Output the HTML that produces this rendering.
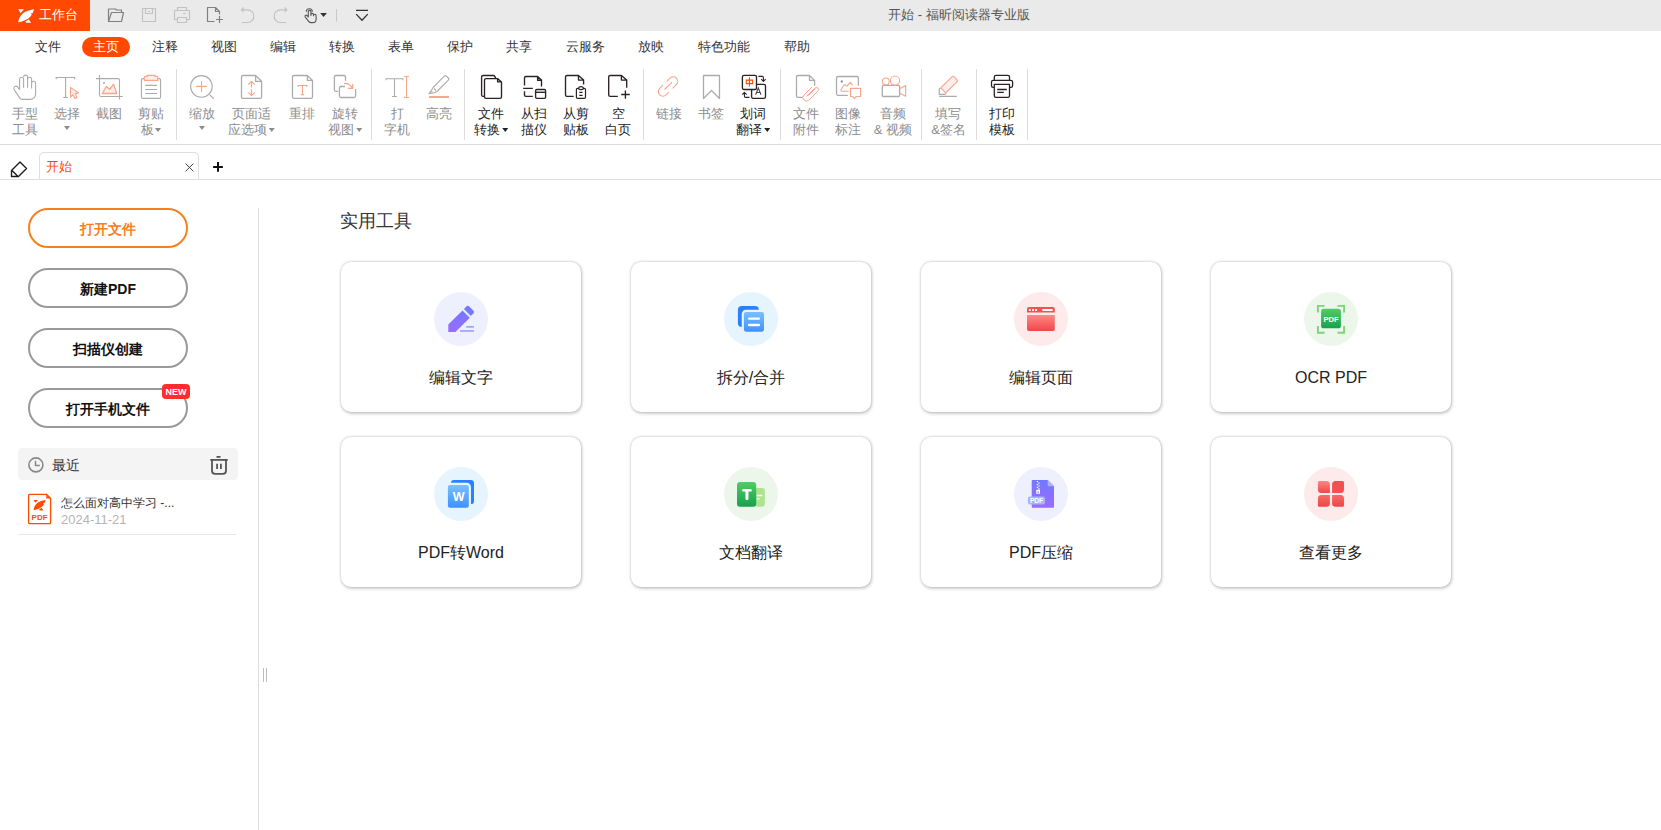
<!DOCTYPE html>
<html><head><meta charset="utf-8">
<style>
*{box-sizing:border-box}
html,body{margin:0;padding:0}
body{width:1661px;height:830px;position:relative;overflow:hidden;background:#fff;font-family:"Liberation Sans",sans-serif;color:#333}
.abs{position:absolute}
#title{left:0;top:0;width:1661px;height:31px;background:#eaeaea}
#ws{left:0;top:0;width:90px;height:31px;background:#ff4800;color:#fff;font-size:13px}
#ws span{position:absolute;left:39px;top:6px;line-height:18px}
#ttl{left:0;top:6px;width:1661px;text-align:center;font-size:13px;color:#555;line-height:18px;padding-left:257px}
.menu{top:37px;font-size:13px;line-height:19px;color:#333;white-space:nowrap;transform:translateX(-50%)}
#pill{left:82px;top:37px;width:48px;height:19.5px;border-radius:10px;background:#ff4800}
.tb{position:absolute;top:105.6px;font-size:13px;line-height:16.8px;text-align:center;white-space:nowrap;transform:translateX(-50%)}
.g{color:#8c8c8c}
.d{color:#222}
.arr{display:inline-block;width:0;height:0;border-left:3.8px solid transparent;border-right:3.8px solid transparent;border-top:4.2px solid currentColor;vertical-align:middle;margin-left:1.5px;position:relative;top:-1px}
.sep{position:absolute;top:69px;width:1px;height:71px;background:#dcdcdc}
svg{position:absolute;overflow:visible}
.btn{position:absolute;left:28px;width:160px;height:40px;border:2px solid #999;border-radius:20px;text-align:center;font-weight:bold;font-size:14px;line-height:38px;color:#111}
.card{position:absolute;width:240px;height:150px;border-radius:10px;background:#fff;box-shadow:0 0 3px rgba(0,0,0,.24),1px 1.5px 3.5px rgba(0,0,0,.16)}
.card .c{position:absolute;left:93px;top:30px;width:54px;height:54px;border-radius:50%}
.card .l{position:absolute;left:0;top:105px;width:240px;text-align:center;font-size:16px;line-height:22px;color:#222}
</style></head>
<body>
<!-- title bar -->
<div id="title" class="abs"></div>
<div id="ws" class="abs"><span>工作台</span></div>
<div id="ttl" class="abs">开始 - 福昕阅读器专业版</div>

<!-- menu -->
<div id="pill" class="abs"></div>
<div class="abs menu" style="left:48px">文件</div>
<div class="abs menu" style="left:106px;color:#fff">主页</div>
<div class="abs menu" style="left:165px">注释</div>
<div class="abs menu" style="left:224px">视图</div>
<div class="abs menu" style="left:283px">编辑</div>
<div class="abs menu" style="left:342px">转换</div>
<div class="abs menu" style="left:401px">表单</div>
<div class="abs menu" style="left:460px">保护</div>
<div class="abs menu" style="left:519px">共享</div>
<div class="abs menu" style="left:585.5px">云服务</div>
<div class="abs menu" style="left:651px">放映</div>
<div class="abs menu" style="left:724px">特色功能</div>
<div class="abs menu" style="left:797px">帮助</div>

<!-- toolbar labels -->
<div class="tb g" style="left:25px">手型<br>工具</div>
<div class="tb g" style="left:67px">选择<br><span class="arr" style="margin:0;top:-3px"></span></div>
<div class="tb g" style="left:108.5px">截图</div>
<div class="tb g" style="left:151px">剪贴<br>板<span class="arr"></span></div>
<div class="sep" style="left:176px"></div>
<div class="tb g" style="left:202px">缩放<br><span class="arr" style="margin:0;top:-3px"></span></div>
<div class="tb g" style="left:251.5px">页面适<br>应选项<span class="arr"></span></div>
<div class="tb g" style="left:302px">重排</div>
<div class="tb g" style="left:345px">旋转<br>视图<span class="arr"></span></div>
<div class="sep" style="left:371px"></div>
<div class="tb g" style="left:397px">打<br>字机</div>
<div class="tb g" style="left:439px">高亮</div>
<div class="sep" style="left:464px"></div>
<div class="tb d" style="left:491px">文件<br>转换<span class="arr"></span></div>
<div class="tb d" style="left:534px">从扫<br>描仪</div>
<div class="tb d" style="left:576px">从剪<br>贴板</div>
<div class="tb d" style="left:618px">空<br>白页</div>
<div class="sep" style="left:643px"></div>
<div class="tb g" style="left:669px">链接</div>
<div class="tb g" style="left:711px">书签</div>
<div class="tb d" style="left:753px">划词<br>翻译<span class="arr"></span></div>
<div class="sep" style="left:780px"></div>
<div class="tb g" style="left:806px">文件<br>附件</div>
<div class="tb g" style="left:848px">图像<br>标注</div>
<div class="tb g" style="left:893px">音频<br>&amp; 视频</div>
<div class="sep" style="left:921px"></div>
<div class="tb g" style="left:948.5px">填写<br>&amp;签名</div>
<div class="sep" style="left:976px"></div>
<div class="tb d" style="left:1001.5px">打印<br>模板</div>
<div class="sep" style="left:1027px"></div>
<div class="abs" style="left:0;top:144px;width:1661px;height:1px;background:#dcdcdc"></div>

<!-- tab row -->
<div class="abs" style="left:39px;top:152px;width:160px;height:28px;border:1px solid #dedede;border-bottom:none;border-radius:5px 5px 0 0;background:#fff"></div>
<div class="abs" style="left:46px;top:157px;font-size:13px;line-height:19px;color:#ff4800">开始</div>
<div class="abs" style="left:0;top:179px;width:1661px;height:1px;background:#dedede"></div>

<!-- sidebar -->
<div class="btn" style="top:208px;border-color:#f5801f;color:#f5801f">打开文件</div>
<div class="btn" style="top:268px">新建PDF</div>
<div class="btn" style="top:328px">扫描仪创建</div>
<div class="btn" style="top:388px">打开手机文件</div>
<div class="abs" style="left:162px;top:384px;width:28px;height:15px;border-radius:4px;background:#ff2d2d;color:#fff;font-weight:bold;font-size:9px;line-height:16px;text-align:center">NEW</div>
<div class="abs" style="left:18px;top:448px;width:220px;height:32px;border-radius:4px;background:#f4f4f4"></div>
<div class="abs" style="left:52px;top:456px;font-size:14px;line-height:19px;color:#333">最近</div>
<div class="abs" style="left:61px;top:495px;font-size:12px;line-height:17px;color:#333">怎么面对高中学习 -...</div>
<div class="abs" style="left:61px;top:512px;font-size:13px;line-height:16px;color:#b4b4b4">2024-11-21</div>
<div class="abs" style="left:18px;top:534px;width:218px;height:1px;background:#e8e8e8"></div>
<div class="abs" style="left:258px;top:208px;width:1px;height:622px;background:#dcdcdc"></div>
<div class="abs" style="left:263px;top:668px;width:1px;height:14px;background:#bdbdbd"></div>
<div class="abs" style="left:266px;top:668px;width:1px;height:14px;background:#bdbdbd"></div>

<!-- main -->
<div class="abs" style="left:340px;top:209px;font-size:18px;line-height:24px;color:#333">实用工具</div>
<div class="card" style="left:341px;top:262px"><div class="c" style="background:#eff0fd"></div><div class="l">编辑文字</div></div>
<div class="card" style="left:631px;top:262px"><div class="c" style="background:#e6f4fd"></div><div class="l">拆分/合并</div></div>
<div class="card" style="left:921px;top:262px"><div class="c" style="background:#fdeaea"></div><div class="l">编辑页面</div></div>
<div class="card" style="left:1211px;top:262px"><div class="c" style="background:#edf6ea"></div><div class="l">OCR PDF</div></div>
<div class="card" style="left:341px;top:437px"><div class="c" style="background:#e6f4fd"></div><div class="l">PDF转Word</div></div>
<div class="card" style="left:631px;top:437px"><div class="c" style="background:#edf6ea"></div><div class="l">文档翻译</div></div>
<div class="card" style="left:921px;top:437px"><div class="c" style="background:#eff0fd"></div><div class="l">PDF压缩</div></div>
<div class="card" style="left:1211px;top:437px"><div class="c" style="background:#fdeaea"></div><div class="l">查看更多</div></div>


<svg class="ov" width="1661" height="830" viewBox="0 0 1661 830" style="position:absolute;left:0;top:0" fill="none" stroke-linecap="butt" stroke-linejoin="round">
<!-- title bar logo -->
<g fill="#fff">
<path d="M18.2,9.2 L24.1,9.2 L20.5,12.9 Z"/>
<path d="M18.4,22.6 C18.4,16.5 23.5,10.3 33.9,9.2 C33.6,11 33.2,12.2 32.4,13.2 L30.6,13.4 L31.7,14.6 C30.6,17.6 25.5,21 18.4,22.6 Z"/>
<path d="M25.4,21.4 L28.7,19.3 L31.1,22.8 L26.2,22.8 Z"/>
</g>
<!-- quick access -->
<g stroke="#808080" stroke-width="1.2">
<path d="M108.5,21.5 V9 H115.5 L116.5,10 H121.5 V12.5"/>
<path d="M108.5,21.5 L111.5,12.5 H123.5 L121.5,21.5 Z"/>
<path d="M214.5,21.5 H207.5 V7.5 H215.5 L219.5,11.5 V14.5 M215.5,7.5 V11.5 H219.5 M216,19.5 H223 M219.5,16 V23"/>
</g>
<g stroke="#c2c2c2" stroke-width="1.2">
<rect x="142.5" y="8.5" width="13" height="13"/>
<path d="M145.5,8.5 V13.5 H152.5 V8.5 M148,11.5 H150"/>
<path d="M177.5,10.5 V7.5 H186.5 V10.5 M177.5,19.5 H174.5 V10.5 H189.5 V19.5 H186.5 M183,13.5 H186"/>
<rect x="177.5" y="17.5" width="9" height="5"/>
<path d="M242,22.5 H247.5 A6.3,6.3 0 0 0 247.5,9.8 H241.5 M243.7,7.5 L241.4,9.8 L243.7,12.1"/>
<path d="M286,22.5 H280.5 A6.3,6.3 0 0 1 280.5,9.8 H287 M284.6,7.5 L286.9,9.8 L284.6,12.1"/>
</g>
<g stroke="#555" stroke-width="1.1">
<path d="M308.3,17.6 V11.7 A1.3,1.3 0 0 1 310.9,11.7 V15.6 V14.7 A1.3,1.3 0 0 1 313.5,14.7 V15.8 V15.5 A1.3,1.3 0 0 1 316.1,15.5 V19.2 Q316.1,22.6 312.8,22.6 H311.3 Q309.6,22.6 308.6,21.3 L305.3,17.1 Q304.6,16.1 305.4,15.4 Q306.2,14.8 307.1,15.7 L308.3,17"/>
<path d="M306.3,11.8 A3,3 0 0 1 312.3,11.8"/>
</g>
<path d="M320.2,12.9 H326.9 L323.55,17.1 Z" fill="#333"/>
<path d="M336.5,9.2 V21.7" stroke="#c8c8c8" stroke-width="1"/>
<path d="M356,10.3 H368 M356.2,14.1 L362,20.2 L367.8,14.1" stroke="#333" stroke-width="1.3"/>

<!-- toolbar: hand -->
<g stroke="#ababab" stroke-width="1.1">
<path d="M19.6,89.8 V79.2 A2,2 0 0 1 23.6,79.2 V87.8 M23.6,77.1 A2,2 0 0 1 27.6,77.1 V87.8 M27.6,79.2 A2,2 0 0 1 31.6,79.2 V88.5 M31.6,83.3 A2,2 0 0 1 35.6,83.3 V93.5 Q35.6,99.4 29.6,99.4 H22.2 Q20.6,99.4 19.4,97.6 L14.2,89.6 Q13.2,87.8 14.6,86.6 Q16.4,85.4 17.8,87.2 L19.6,89.8"/>
<!-- select T -->
<path stroke-linejoin="miter" d="M56.2,79.2 V77.5 H74.7 V79.2 M65.6,77.5 V97.5 M63.2,97.5 H68"/>
<!-- screenshot -->
<path d="M99.5,75 V95 Q99.5,96.5 101,96.5 H122.8 M96,78.6 H118 Q119.5,78.6 119.5,80 V99.6"/>
<!-- clipboard -->
<path d="M144.2,78.6 H142.9 Q141.4,78.6 141.4,80.1 V96.9 Q141.4,98.4 142.9,98.4 H159.1 Q160.6,98.4 160.6,96.9 V80.1 Q160.6,78.6 159.1,78.6 H157.8 M145.2,85.4 H157 M145.2,89.5 H157 M145.2,93.5 H157"/>
<!-- zoom -->
<circle cx="201.4" cy="86.4" r="10.8"/>
<path d="M209.6,94.6 L213.8,98.8"/>
<!-- fit page -->
<path d="M255.6,75.5 H243 Q241.5,75.5 241.5,77 V97 Q241.5,98.4 243,98.4 H260.1 Q261.6,98.4 261.6,97 V81.3 L255.6,75.5 V81.3 H261.6" stroke-width="1.3"/>
<!-- reflow -->
<path d="M307.4,75.5 H294 Q292.5,75.5 292.5,77 V97 Q292.5,98.4 294,98.4 H311 Q312.5,98.4 312.5,97 V80.4 L307.4,75.5 V80.4 H312.5" stroke-width="1.3"/>
<!-- rotate -->
<path d="M338,91.4 H335.9 Q334.4,91.4 334.4,89.9 V77 Q334.4,75.5 335.9,75.5 H344 Q345.5,75.5 345.5,77 V80.8 M345,86.5 H340.9 Q339.4,86.5 339.4,88 V96 Q339.4,97.5 340.9,97.5 H354.1 Q355.6,97.5 355.6,96 V89" stroke-width="1.3"/>
<!-- typewriter T -->
<path stroke-linejoin="miter" d="M386,80.2 V78.7 H402.9 V80.2 M394.5,78.7 V96.5 M392,96.5 H397"/>
<!-- highlight marker -->
<path d="M433,87.5 L444.3,76.2 Q445.4,75.1 446.5,76.2 L448.3,78 Q449.4,79.1 448.3,80.2 L437,91.5 M434,88.5 L436,90.5 M433,87.5 L431.5,90.2 L429,93.6 L434.5,92.8 L437,91.5"/>
<!-- bookmark -->
<path d="M703.5,98.5 V75.5 H719.5 V98.5 L711.5,90.5 Z" stroke-width="1.3"/>
<!-- file attach page -->
<path d="M802.8,97.4 H798 Q796.5,97.4 796.5,96 V77 Q796.5,75.5 798,75.5 H809.5 L814.6,80.4 V85.7 M809.5,75.5 V80.4 H814.6" stroke-width="1.3"/>
<!-- image annot frame -->
<path d="M847.8,95.3 H838 Q836.5,95.3 836.5,93.8 V78 Q836.5,76.5 838,76.5 H856.9 Q858.4,76.5 858.4,78 V85.7" stroke-width="1.3"/>
<!-- video body -->
<rect x="882.3" y="85.4" width="17.3" height="11.1" rx="1.2" stroke-width="1.3"/>
<!-- fill sign tip + line -->
<path d="M940.5,88 L939.2,89.2 V94.4 H944.9 L946,93.2 M939.2,96.4 H956.8" stroke-width="1.2"/>
</g>
<circle cx="104" cy="82.9" r="0.9" fill="#999"/>
<circle cx="841.8" cy="81.5" r="1.2" fill="#999"/>

<g stroke="#f9a68b" stroke-width="1.1">
<path d="M70.5,87.4 V97.2 L72.9,94.7 L75,98.5 L77,97.5 L75.1,93.6 L78.6,93 Z" fill="#fdeeee"/>
<path d="M102.3,93.5 L106.4,86.4 L109.5,89.5 L113.6,84.2 L116.7,93.5 Z" fill="#fdeeee" stroke-width="1.3"/>
<path d="M144.3,80.4 V77.6 Q144.3,76.3 145.6,76.3 H147.3 V75.4 H154.8 V76.3 H156.4 Q157.7,76.3 157.7,77.6 V80.4 Z" fill="#fdeeee" stroke-width="1.2"/>
<path d="M196,86.4 H206.9 M201.5,81 V91.9"/>
<path d="M251.5,81.5 V87.6 M248.2,84.6 L251.5,81.3 L254.8,84.6 M251.5,89.3 V95.6 M248.2,92.4 L251.5,95.7 L254.8,92.4" stroke-width="1.2"/>
<path stroke-linejoin="miter" d="M298,87 V85.5 H306.9 V87 M302.5,85.5 V94.6 M300.9,94.6 H304.1"/>
<path d="M344,83.4 Q349.5,83 352.2,88 M348.1,88.4 H352.7 V84" stroke-width="1.2"/>
<path d="M404,76.5 H409 M406.5,76.5 V97.5 M404,97.5 H409"/>
<path d="M430.8,90.7 L432.5,92.5" stroke-width="1.6"/>
<path d="M664.5,89.5 L672,82.2 M666.8,81.4 L670,78.2 A4.5,4.5 0 0 1 676.4,84.6 L672.6,88.4 M663,85.2 L659.7,88.4 A4.5,4.5 0 0 0 666.1,94.8 L668.7,92.2"/>
<path d="M806.5,96.5 L815,88 A2.1,2.1 0 0 1 818,91 L809,100 A3.5,3.5 0 0 1 804,95 L812,87 M808.5,95.5 L815.2,88.8" stroke-width="1"/>
<path d="M848.8,91.2 H842.2 Q840.2,91.2 841.2,89.2 L844.4,84.5 L847.1,86.1 L850.2,82.3 L852.6,85.4" stroke-width="1.1"/>
<path d="M850.5,88.3 H860.6 V96.5 H856.2 L854.5,98.7 L852.8,96.5 H850.5 Z" stroke-width="1.2"/>
<path d="M899.6,88.7 L905.6,85.6 V96.3 L899.6,93" stroke-width="1.2"/>
<circle cx="885.8" cy="81.4" r="3.4"/>
<circle cx="895" cy="80.6" r="4.6"/>
<path d="M940.8,87.9 L951.9,76.8 Q953,75.7 954.1,76.8 L956.9,79.6 Q958,80.7 956.9,81.8 L945.8,92.9 Z" fill="#fdeeee" stroke-width="1.2"/>
</g>
<rect x="429" y="96" width="20" height="2" fill="#f9a68b"/>

<!-- dark icons -->
<g stroke="#2b2323" stroke-width="1.35">
<path d="M484.2,96.4 H483 Q481.6,96.4 481.6,95 V77 Q481.6,75.5 483,75.5 H494 L495.8,78"/>
<path d="M497.6,78.6 H486 Q484.5,78.6 484.5,80.1 V97 Q484.5,98.4 486,98.4 H500 Q501.5,98.4 501.5,97 V81.9 L497.6,78.6 V81.9 H501.5"/>
<path d="M524.5,85.4 V78 Q524.5,76.5 526,76.5 H537.6 L541.5,79.9 V86.6 M537.6,76.5 V80.2 H541.5 M524.5,91.2 V95 Q524.5,96.4 526,96.4 H532.8 M523.2,88.4 H532.8"/>
<rect x="535.6" y="89.5" width="10" height="8.9" rx="1.3"/>
<path d="M535.6,92.3 H545.6"/>
<path d="M573.7,96.4 H567 Q565.5,96.4 565.5,95 V77 Q565.5,75.5 567,75.5 H578.5 L583.6,80.1 V84.5 M578.5,75.5 V80.1 H583.6"/>
<path d="M578.4,88.3 H577.6 Q576.4,88.3 576.4,89.5 V97.2 Q576.4,98.4 577.6,98.4 H584.3 Q585.5,98.4 585.5,97.2 V89.5 Q585.5,88.3 584.3,88.3 H583.6 M578.6,88.6 Q578.6,86.6 581,86.6 Q583.4,86.6 583.4,88.6 Q583.4,89.6 581,89.6 Q578.6,89.6 578.6,88.6 M579.3,92.4 H582.6 M579.3,95.4 H582.6" stroke-width="1.2"/>
<path d="M617.8,96.4 H610.2 Q608.7,96.4 608.7,95 V77 Q608.7,75.5 610.2,75.5 H621.4 L626.7,80.1 V87.8 M621.4,75.5 V80.1 H626.7 M621.2,94.5 H629.8 M625.4,90.5 V98.8"/>
<rect x="742.4" y="75.3" width="14.1" height="14.2" rx="1.6"/>
<path d="M756.5,84.3 H763.9 Q765.5,84.3 765.5,85.9 V96.7 Q765.5,98.3 763.9,98.3 H753.2 Q751.6,98.3 751.6,96.7 V89.5"/>
<path d="M758.4,76.4 H762.3 Q763.4,76.4 763.4,77.5 V81 M761.2,79.2 L763.4,81.3 L765.7,79.2 M749.5,97.4 H745.6 Q744.4,97.4 744.4,96.3 V92.5 M742.2,94.6 L744.4,92.4 L746.7,94.6" stroke-width="1.1"/>
<path d="M994.3,80.4 V77 Q994.3,75.3 996,75.3 H1007.8 Q1009.5,75.3 1009.5,77 V80.4 M994.3,87.4 H993.2 Q991.5,87.4 991.5,85.7 V82.1 Q991.5,80.4 993.2,80.4 H1010.9 Q1012.6,80.4 1012.6,82.1 V85.7 Q1012.6,87.4 1010.9,87.4 H1009.5 M996,84.3 H1009.5 V95.7 Q1009.5,97.4 1007.8,97.4 H996 Q994.3,97.4 994.3,95.7 V84.3 Z M997.2,89.5 H1006.8 M997.2,92.4 H1003.8" stroke-width="1.3"/>
</g>
<path d="M755.6,94.8 L758.3,88 L761,94.8 M756.6,92.5 H760" stroke="#444" stroke-width="1.05" stroke-linejoin="miter"/>
<path d="M746.3,80.1 H752.6 V83.6 H746.3 Z M749.45,77.2 V86.6" stroke="#ff4800" stroke-width="1.05" stroke-linejoin="miter"/>

<!-- tab row -->
<path d="M11.5,176.5 V170.5 L20,162 L26.5,168.5 L18.5,176.5 Z M12,170.5 L18,176.5" stroke="#1a1a1a" stroke-width="1.35"/>
<path d="M185.6,163.6 L193.4,171.3 M193.4,163.6 L185.6,171.3" stroke="#444" stroke-width="1"/>
<path d="M213.1,167 H222.9 M218,162 V171.7" stroke="#111" stroke-width="2"/>
</svg>


<svg class="ov2" width="1661" height="830" viewBox="0 0 1661 830" style="position:absolute;left:0;top:0">
<defs>
<linearGradient id="gPur" x1="0" y1="0" x2="0" y2="1"><stop offset="0" stop-color="#7277ff"/><stop offset="1" stop-color="#9a6dff"/></linearGradient>
<linearGradient id="gBlu" x1="0" y1="0" x2="0" y2="1"><stop offset="0" stop-color="#7cc3ff"/><stop offset="1" stop-color="#3b8eff"/></linearGradient>
<linearGradient id="gRed" x1="0" y1="0" x2="0" y2="1"><stop offset="0" stop-color="#ff8787"/><stop offset="1" stop-color="#f04848"/></linearGradient>
<linearGradient id="gGrn" x1="0" y1="0" x2="0" y2="1"><stop offset="0" stop-color="#52cc66"/><stop offset="1" stop-color="#15a24c"/></linearGradient>
<linearGradient id="gRed2" x1="0" y1="0" x2="0" y2="1"><stop offset="0" stop-color="#f86a6a"/><stop offset="1" stop-color="#ee4545"/></linearGradient>
</defs>
<!-- sidebar -->
<circle cx="35.9" cy="464.9" r="7" fill="none" stroke="#888" stroke-width="1.6"/>
<path d="M35.5,460.8 V465.5 H39.8" fill="none" stroke="#888" stroke-width="1.5"/>
<g fill="none" stroke="#555" stroke-width="1.8">
<path d="M216.5,456.9 H220.5"/>
<path d="M210.3,459.9 H227.7"/>
<path d="M212,460 V470.8 Q212,473.8 215,473.8 H223 Q226,473.8 226,470.8 V460"/>
<path d="M217.1,463.8 V469 M220.9,463.8 V469"/>
</g>
<path d="M46.6,494.3 H29.6 Q28.6,494.3 28.6,495.3 V522.7 Q28.6,523.6 29.6,523.6 H49.6 Q50.6,523.6 50.6,522.7 V498.3 Z" fill="#fff" stroke="#ff4d00" stroke-width="1.3"/>
<path d="M46.3,494.3 L50.6,498.6 H46.3 Z" fill="#ff4d00"/>
<g fill="#ff4d00" transform="translate(19.5,492.9) scale(0.77)">
<path d="M18.2,9.2 L24.1,9.2 L20.5,12.9 Z"/>
<path d="M18.4,22.6 C18.4,16.5 23.5,10.3 33.9,9.2 C33.6,11 33.2,12.2 32.4,13.2 L30.6,13.4 L31.7,14.6 C30.6,17.6 25.5,21 18.4,22.6 Z"/>
<path d="M25.4,21.4 L28.7,19.3 L31.1,22.8 L26.2,22.8 Z"/>
</g>
<text x="39.6" y="520" text-anchor="middle" font-family="Liberation Sans" font-weight="bold" font-size="8" fill="#ff4d00">PDF</text>

<!-- card 1: edit text -->
<path d="M448.3,324.6 L462.5,310.4 L469.8,317.7 L455.5,331.9 H448.3 Z" fill="url(#gPur)"/>
<path d="M463.9,309 L466.6,306.3 Q467.8,305.1 469,306.3 L473.5,310.8 Q474.7,312 473.5,313.2 L470.8,315.9 Z" fill="#7479ff"/>
<rect x="466.2" y="326" width="7.8" height="1.7" fill="#9aa6ff"/>
<rect x="459.9" y="330.1" width="14.1" height="1.7" fill="#9aa6ff"/>

<!-- card 2: split/merge -->
<rect x="737.9" y="305.9" width="21" height="21" rx="4" fill="#2a80ff"/>
<rect x="742.8" y="310.8" width="22.3" height="22" rx="3.2" fill="url(#gBlu)" stroke="#e6f4fd" stroke-width="2.2"/>
<path d="M749,318.6 H759 M749,325 H759" stroke="#fff" stroke-width="2.3" stroke-linecap="round"/>

<!-- card 3: edit page -->
<path d="M1029,307 H1052.8 Q1054.8,307 1054.8,309 V312.6 H1027 V309 Q1027,307 1029,307 Z" fill="#f05252"/>
<path d="M1027,314.9 H1054.8 V328.9 Q1054.8,330.9 1052.8,330.9 H1029 Q1027,330.9 1027,328.9 Z" fill="url(#gRed)"/>
<g fill="#fff"><rect x="1028.9" y="309.1" width="1.9" height="1.9"/><rect x="1032.1" y="309.1" width="1.9" height="1.9"/><rect x="1035.1" y="309.1" width="1.9" height="1.9"/><rect x="1042.1" y="309.1" width="10.8" height="1.9" rx="0.9"/></g>

<!-- card 4: OCR -->
<path d="M1317.9,312.5 V305.9 H1324.6 M1337.5,305.9 H1344.1 V312.5 M1344.1,326 V332.7 H1337.5 M1324.6,332.7 H1317.9 V326" fill="none" stroke="#7fd47a" stroke-width="1.9"/>
<rect x="1321.1" y="308.8" width="19.8" height="19.5" rx="2.6" fill="url(#gGrn)"/>
<text x="1331" y="321.6" text-anchor="middle" font-family="Liberation Sans" font-weight="bold" font-size="7.6" fill="#fff">PDF</text>

<!-- card 5: PDF to word -->
<rect x="450.9" y="480" width="23.1" height="24.1" rx="3.2" fill="#2a80ff"/>
<rect x="446.8" y="483.9" width="23.1" height="25" rx="3.2" fill="url(#gBlu)" stroke="#e6f4fd" stroke-width="2.2"/>
<text x="458.6" y="501.1" text-anchor="middle" font-family="Liberation Sans" font-weight="bold" font-size="12.5" fill="#fff">W</text>

<!-- card 6: translate -->
<rect x="755" y="488" width="9.8" height="18.7" rx="2.4" fill="#aee38f"/>
<path d="M756.6,495.5 H762.2 M756.6,498.8 H759.6" stroke="#fff" stroke-width="1.3"/>
<rect x="737" y="482" width="19.2" height="24.7" rx="3" fill="url(#gGrn)"/>
<rect x="742.2" y="488.9" width="9.5" height="2.7" rx="1.2" fill="#fff"/><rect x="745.45" y="488.9" width="3" height="11.1" rx="1.3" fill="#fff"/>

<!-- card 7: compress -->
<path d="M1032.7,480 H1047.7 L1054,486.3 V506.8 Q1054,507.8 1053,507.8 H1032.7 Q1031.7,507.8 1031.7,506.8 V481 Q1031.7,480 1032.7,480 Z" fill="url(#gPur)"/>
<path d="M1047.7,480 L1054,486.3 H1048.7 Q1047.7,486.3 1047.7,485.3 Z" fill="#a9b2ff"/>
<g fill="#fff"><rect x="1036.8" y="481" width="1.3" height="1.2"/><rect x="1038.3" y="482.5" width="1.3" height="1.2"/><rect x="1036.8" y="484" width="1.3" height="1.2"/><rect x="1038.3" y="485.4" width="1.3" height="1.2"/><rect x="1036.8" y="486.8" width="1.3" height="1.2"/><rect x="1038.3" y="488.2" width="1.3" height="1.2"/></g>
<path d="M1036.3,489.7 H1040 V493.8 H1036.3 Z M1037.4,491.4 V492.8 H1038.9 V491.4 Z" fill="#fff" fill-rule="evenodd"/>
<rect x="1027.9" y="496.5" width="17.1" height="8" rx="2" fill="#a6b5ff"/>
<text x="1036.5" y="503" text-anchor="middle" font-family="Liberation Sans" font-weight="bold" font-size="6.6" fill="#fff">PDF</text>

<!-- card 8: more -->
<path d="M1319.4,480.9 H1326.4 Q1329.9,480.9 1329.9,484.4 V492.9 H1321.4 Q1317.9,492.9 1317.9,489.4 V482.4 Q1317.9,480.9 1319.4,480.9 Z" fill="url(#gRed)"/>
<path d="M1335.6,480.9 H1342.5 Q1344,480.9 1344,482.4 V489.4 Q1344,492.9 1340.5,492.9 H1332.1 V484.4 Q1332.1,480.9 1335.6,480.9 Z" fill="#f05050"/>
<path d="M1321.4,495.1 H1329.9 V503.2 Q1329.9,506.7 1326.4,506.7 H1319.4 Q1317.9,506.7 1317.9,505.2 V498.6 Q1317.9,495.1 1321.4,495.1 Z" fill="url(#gRed2)"/>
<path d="M1332.1,495.1 H1340.5 Q1344,495.1 1344,498.6 V505.2 Q1344,506.7 1342.5,506.7 H1335.6 Q1332.1,506.7 1332.1,503.2 Z" fill="url(#gRed2)"/>
</svg>

</body></html>
